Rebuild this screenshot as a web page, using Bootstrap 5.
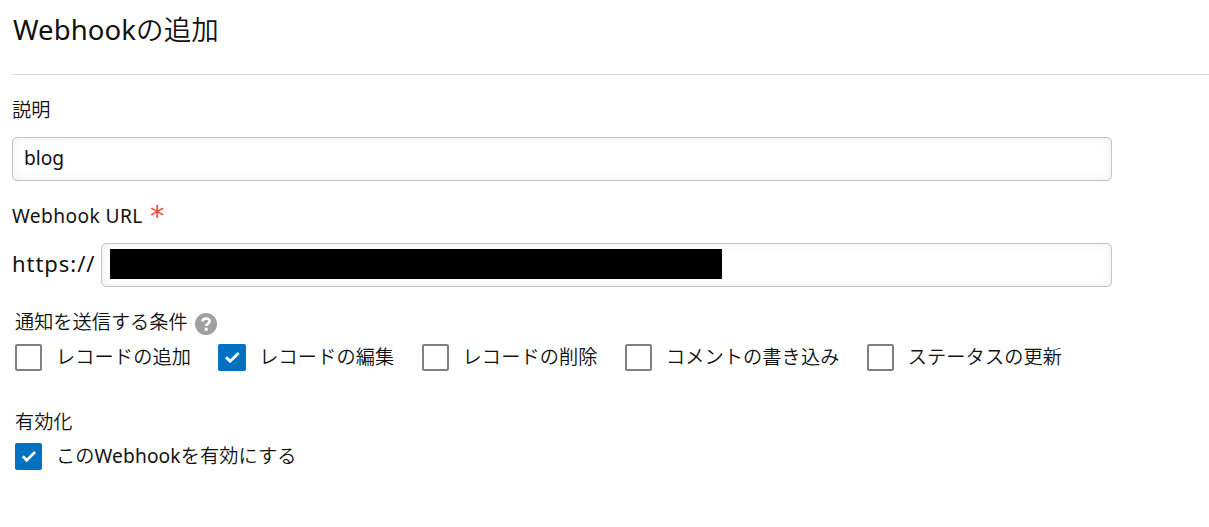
<!DOCTYPE html>
<html lang="ja">
<head>
  <meta charset="UTF-8" />
  <meta name="viewport" content="width=device-width, initial-scale=1.0"/>
  <title>Webhookの追加</title>
  <link href="https://cdn.jsdelivr.net/npm/bootstrap@5.3.0/dist/css/bootstrap.min.css" rel="stylesheet">
  <style>
    body {
      background-color: #fff;
      color: #111;
      font-family: "Noto Sans", "Noto Sans CJK JP", sans-serif;
      font-size: 19.2px;
      font-weight: 350;
      line-height: 28px;
    }
    .page {
      padding-left: 12px;
    }
    .page-header {
      height: 75px;
      padding: 10px 0 0 1px;
      border-bottom: 1px solid #dcdcdc;
    }
    .page-header h1 {
      font-size: 27.5px;
      font-weight: 350;
      letter-spacing: 0.1px;
      line-height: 40px;
    }
    .field-area {
      width: 1100px;
      padding-top: 21px;
    }
    .field-label {
      height: 28px;
      margin-bottom: 13px;
    }
    .field-label.url-label {
      margin-top: 21px;
    }
    .latin {
      font-weight: 400;
    }
    .url-title {
      width: 131px;
      letter-spacing: 0.4px;
    }
    .form-control {
      height: 44px;
      padding: 4px 11px 8px;
      border: 1px solid #c2c4c5;
      border-radius: 5px;
      color: #111;
      font-size: 19.2px;
      box-shadow: inset 0 0 8px #ececec;
    }
    .url-input {
      padding: 5px 8px 7px;
    }
    .masked {
      width: 612px;
      height: 30px;
      background-color: #000;
    }
    .required {
      color: #e74c3c;
      font-family: "DejaVu Sans", sans-serif;
      font-size: 29px;
      font-weight: 400;
      margin: 0 0 1px 7px;
    }
    .scheme {
      width: 89px;
      padding-bottom: 4px;
      font-size: 22px;
      letter-spacing: 0.95px;
    }
    .group {
      padding-left: 3px;
    }
    .events {
      margin-top: 21px;
    }
    .enable {
      margin-top: 37px;
    }
    .enable .check-row {
      margin-top: 6px;
    }
    .help {
      margin: 4px 0 0 7px;
    }
    .check-row {
      height: 28px;
      margin-top: 7px;
    }
    .form-check {
      min-height: 28px;
      margin: 0 27.3px 0 0;
      padding: 0;
    }
    .form-check .form-check-input {
      float: none;
      flex: none;
      width: 27.4px;
      height: 27px;
      margin: 0 13.6px 0 0;
      border: 2px solid #808080;
      border-radius: 2px;
    }
    .form-check label {
      letter-spacing: 0.1px;
    }
    .form-check .form-check-input:checked {
      border-color: #0070c0;
      background-color: #0070c0;
      background-size: 27px 27px;
      background-position: center;
      background-image: url("data:image/svg+xml,%3Csvg xmlns='http://www.w3.org/2000/svg' viewBox='0 0 27 27'%3E%3Cpath d='M7.6 13.2l4 4.1 8.4-8.3' fill='none' stroke='%23fff' stroke-width='2.7'/%3E%3C/svg%3E");
    }
  </style>
</head>
<body>
  <div class="page">
    <header class="page-header">
      <h1 class="m-0"><span class="latin">Webhook</span>の追加</h1>
    </header>

    <form>
      <div class="field-area">
        <label class="field-label d-block" for="description">説明</label>
        <input type="text" class="form-control" id="description" value="blog" />

        <div class="field-label url-label d-flex align-items-center">
          <span class="url-title latin text-nowrap">Webhook URL</span>
          <span class="required">*</span>
        </div>
        <div class="d-flex align-items-center">
          <span class="scheme latin flex-shrink-0">https://</span>
          <div class="form-control url-input d-flex align-items-center">
            <div class="masked"></div>
          </div>
        </div>
      </div>

      <div class="group events">
        <div class="d-flex align-items-center">
          <span>通知を送信する条件</span>
          <svg class="help" width="22" height="22" viewBox="0 0 22 22">
            <circle cx="11" cy="11" r="11" fill="#a0a0a0"/>
            <path d="M7.5 8.5c.2-2 1.6-3 3.6-3s3.5 1 3.5 2.8c0 2.4-3.3 2.3-3.3 4.8" fill="none" stroke="#fff" stroke-width="2.6"/>
            <rect x="9.7" y="14.7" width="3" height="3" fill="#fff"/>
          </svg>
        </div>
        <div class="check-row d-flex">
          <div class="form-check d-flex align-items-center">
            <input class="form-check-input" type="checkbox" id="add">
            <label for="add">レコードの追加</label>
          </div>
          <div class="form-check d-flex align-items-center">
            <input class="form-check-input" type="checkbox" id="edit" checked>
            <label for="edit">レコードの編集</label>
          </div>
          <div class="form-check d-flex align-items-center">
            <input class="form-check-input" type="checkbox" id="delete">
            <label for="delete">レコードの削除</label>
          </div>
          <div class="form-check d-flex align-items-center">
            <input class="form-check-input" type="checkbox" id="comment">
            <label for="comment">コメントの書き込み</label>
          </div>
          <div class="form-check d-flex align-items-center">
            <input class="form-check-input" type="checkbox" id="status">
            <label for="status">ステータスの更新</label>
          </div>
        </div>
      </div>

      <div class="group enable">
        <div>有効化</div>
        <div class="check-row d-flex">
          <div class="form-check d-flex align-items-center">
            <input class="form-check-input" type="checkbox" id="enabled" checked>
            <label for="enabled">この<span class="latin">Webhook</span>を有効にする</label>
          </div>
        </div>
      </div>
    </form>
  </div>
  <script src="https://cdn.jsdelivr.net/npm/bootstrap@5.3.0/dist/js/bootstrap.bundle.min.js"></script>
</body>
</html>
